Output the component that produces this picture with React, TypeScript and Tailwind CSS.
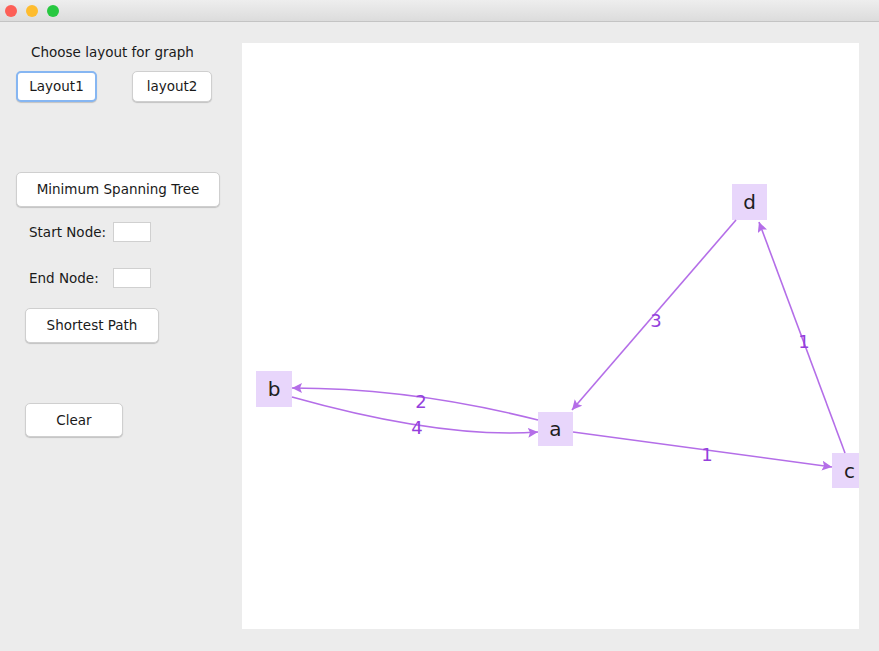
import React from "react";

type Node = { id: string; x: number; y: number; w: number; h: number };

// canvas-relative coordinates
const nodes: Node[] = [
  { id: "d", x: 490, y: 141, w: 35, h: 36 },
  { id: "c", x: 590, y: 410, w: 35, h: 35 },
  { id: "b", x: 14, y: 328, w: 36, h: 36 },
  { id: "a", x: 296, y: 369, w: 35, h: 34 },
];

const edges = [
  { d: "M494 177 L330 367", label: "3", lx: 414, ly: 277 },
  { d: "M603 410 L517 179", label: "1", lx: 562, ly: 298 },
  { d: "M331 389 L590 424", label: "1", lx: 465, ly: 411 },
  { d: "M296 377 Q170 345 50 345", label: "2", lx: 179, ly: 358 },
  { d: "M50 354 Q200 396 296 389", label: "4", lx: 175, ly: 384 },
];

function MacButton({ label, focused, className }: { label: string; focused?: boolean; className: string }) {
  return (
    <button
      className={`flex items-center justify-center bg-white rounded-[5px] text-[13.5px] text-[#1a1a1a] shadow-[0_1px_1px_rgba(0,0,0,0.18)] ${
        focused ? "border-[2px] border-[#86b6f2]" : "border border-[#cfcfcf]"
      } ${className}`}
    >
      {label}
    </button>
  );
}

export default function App() {
  return (
    <div className="w-[879px] h-[651px] bg-[#ececec] overflow-hidden" style={{ fontFamily: '"DejaVu Sans", "Noto Sans", sans-serif' }}>
      {/* Title bar */}
      <div className="h-[22px] bg-gradient-to-b from-[#eeeeee] to-[#dcdcdc] border-b border-[#c4c4c4] flex items-center gap-[9px] pl-[5px]">
        <span className="w-[12px] h-[12px] rounded-full bg-[#fd5f57]" />
        <span className="w-[12px] h-[12px] rounded-full bg-[#febc2e]" />
        <span className="w-[12px] h-[12px] rounded-full bg-[#27c840]" />
      </div>

      <div className="flex">
        {/* Left control panel */}
        <div className="w-[242px] flex flex-col pt-[22px]">
          <div className="pl-[31px] h-[16px] leading-[16px] text-[13.5px] text-[#1a1a1a]">Choose layout for graph</div>
          <div className="flex mt-[11px] pl-[16px]">
            <MacButton label="Layout1" focused className="w-[81px] h-[31px]" />
            <MacButton label="layout2" className="w-[80px] h-[31px] ml-[35px]" />
          </div>
          <MacButton label="Minimum Spanning Tree" className="w-[204px] h-[35px] ml-[16px] mt-[70px]" />
          <div className="flex items-center mt-[15px] pl-[29px] h-[20px]">
            <span className="w-[84px] text-[13.5px] text-[#1a1a1a]">Start Node:</span>
            <div className="w-[38px] h-[20px] bg-white border border-[#d0d0d0]" />
          </div>
          <div className="flex items-center mt-[26px] pl-[29px] h-[20px]">
            <span className="w-[84px] text-[13.5px] text-[#1a1a1a]">End Node:</span>
            <div className="w-[38px] h-[20px] bg-white border border-[#d0d0d0]" />
          </div>
          <MacButton label="Shortest Path" className="w-[134px] h-[35px] ml-[25px] mt-[20px]" />
          <MacButton label="Clear" className="w-[98px] h-[34px] ml-[25px] mt-[60px]" />
        </div>

        {/* Graph canvas */}
        <div className="relative w-[617px] h-[586px] mt-[21px] bg-white overflow-hidden">
          {nodes.map((n) => (
            <div
              key={n.id}
              className="absolute flex items-center justify-center bg-[#e8d6fb] text-[20px] text-[#1e1e1e]"
              style={{ left: n.x, top: n.y, width: n.w, height: n.h }}
            >
              {n.id}
            </div>
          ))}
          <svg className="absolute inset-0" width={617} height={586}>
            <defs>
              <marker id="arrow" viewBox="0 0 10 10" refX="10" refY="5" markerWidth="10" markerHeight="10" markerUnits="userSpaceOnUse" orient="auto">
                <path d="M0 0 L10 5 L0 10 L2 5 Z" fill="#b46ee8" />
              </marker>
            </defs>
            {edges.map((e, i) => (
              <g key={i}>
                <path d={e.d} fill="none" stroke="#b46ee8" strokeWidth={1.6} markerEnd="url(#arrow)" />
                <text x={e.lx} y={e.ly} textAnchor="middle" dominantBaseline="central" fontSize={18} fill="#9440dc" fontFamily='"DejaVu Sans", sans-serif'>
                  {e.label}
                </text>
              </g>
            ))}
          </svg>
        </div>
      </div>
    </div>
  );
}
